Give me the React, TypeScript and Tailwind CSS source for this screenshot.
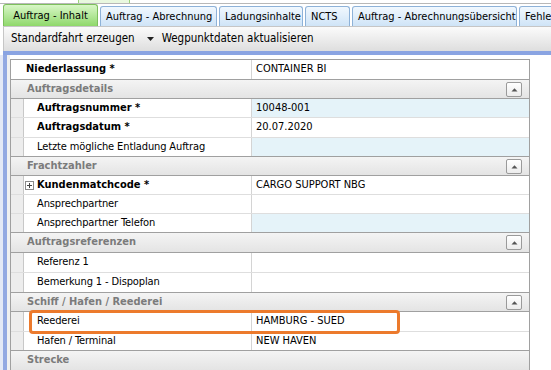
import React from "react";

type Row =
  | { kind: "top"; label: string; value: string; h: number }
  | { kind: "cat"; label: string; h: number }
  | { kind: "item"; label: string; value?: string; bold?: boolean; blue?: boolean; expand?: boolean; h: number; last?: boolean };

const rows: Row[] = [
  { kind: "top", label: "Niederlassung *", value: "CONTAINER BI", h: 20 },
  { kind: "cat", label: "Auftragsdetails", h: 19 },
  { kind: "item", label: "Auftragsnummer *", value: "10048-001", bold: true, blue: true, h: 19 },
  { kind: "item", label: "Auftragsdatum *", value: "20.07.2020", bold: true, h: 20 },
  { kind: "item", label: "Letzte mögliche Entladung Auftrag", blue: true, h: 19, last: true },
  { kind: "cat", label: "Frachtzahler", h: 19 },
  { kind: "item", label: "Kundenmatchcode *", value: "CARGO SUPPORT NBG", bold: true, expand: true, h: 19 },
  { kind: "item", label: "Ansprechpartner", h: 19 },
  { kind: "item", label: "Ansprechpartner Telefon", blue: true, h: 19, last: true },
  { kind: "cat", label: "Auftragsreferenzen", h: 20 },
  { kind: "item", label: "Referenz 1", h: 20 },
  { kind: "item", label: "Bemerkung 1 - Dispoplan", h: 20, last: true },
  { kind: "cat", label: "Schiff / Hafen / Reederei", h: 19 },
  { kind: "item", label: "Reederei", value: "HAMBURG - SUED", h: 20 },
  { kind: "item", label: "Hafen / Terminal", value: "NEW HAVEN", h: 19, last: true },
  { kind: "cat", label: "Strecke", h: 20 },
];

const tabs = [
  { label: "Auftrag - Inhalt", w: 95, active: true },
  { label: "Auftrag - Abrechnung", w: 117 },
  { label: "Ladungsinhalte", w: 84 },
  { label: "NCTS", w: 45 },
  { label: "Auftrag - Abrechnungsübersicht", w: 165 },
  { label: "Fehlerliste", w: 60 },
];

const CollapseButton = () => (
  <div className="ml-auto mr-[7px] flex h-[15px] w-[16px] items-center justify-center rounded-[2px] border border-[#9a9a9a] bg-gradient-to-b from-[#ffffff] to-[#ececec]">
    <svg width="7" height="5" viewBox="0 0 7 5">
      <path d="M0.5 4.5 L3.5 1.2 L6.5 4.5 Z" fill="#555" />
    </svg>
  </div>
);

export default function App() {
  return (
    <div
      className="relative h-[370px] w-[551px] overflow-hidden bg-white text-black font-stretch-condensed"
      style={{ fontFamily: "'DejaVu Sans Condensed', 'DejaVu Sans', 'Liberation Sans', sans-serif" }}
    >
      {/* remnant of upper tab row */}
      <div className="flex h-[4px] border-b border-[#b8b8b8]">
        <div className="w-[78px]" />
        <div className="w-[52px] border-x border-[#9bd27c] bg-[#e9f8df]" />
      </div>

      {/* tabs */}
      <div className="flex h-[22px] items-end gap-[2px] pl-[3px]">
        {tabs.map((t) =>
          t.active ? (
            <div
              key={t.label}
              className="flex h-[22px] shrink-0 items-center justify-center overflow-hidden rounded-t-[3px] border border-b-0 border-[#7dbf5c] bg-gradient-to-b from-[#d8f6c6] to-[#8fd86a] text-[11px] leading-none"
              style={{ width: t.w }}
            >
              <span className="whitespace-nowrap">{t.label}</span>
            </div>
          ) : (
            <div
              key={t.label}
              className="flex h-[20px] shrink-0 items-center justify-start overflow-hidden rounded-t-[3px] border border-b-0 border-[#8eb2d8] bg-gradient-to-b from-[#f1f8fe] to-[#cfe4f7] px-[5px] text-[11px] leading-none"
              style={{ width: t.w }}
            >
              <span className="whitespace-nowrap">{t.label}</span>
            </div>
          )
        )}
      </div>

      {/* toolbar */}
      <div className="ml-[3px] flex h-[25px] items-center border-l border-t border-[#c6c6c6] bg-gradient-to-b from-[#fbfbfb] to-[#dedede] text-[11.5px]">
        <span className="ml-[7px] whitespace-nowrap">Standardfahrt erzeugen</span>
        <svg className="ml-[12px]" width="7" height="4" viewBox="0 0 7 4">
          <path d="M0 0 H7 L3.5 4 Z" fill="#222" />
        </svg>
        <span className="ml-[8px] whitespace-nowrap">Wegpunktdaten aktualisieren</span>
      </div>

      {/* blue bar */}
      <div className="ml-[3px] h-[4px] bg-[#8aa4e2]" />

      {/* content */}
      <div className="flex h-[320px]">
        <div className="w-[3px] bg-[#e4e9f6]" />
        <div className="w-[4px] bg-[#93a9e2]" />
        <div className="w-[3px] bg-[#f0f0f0]" />
        <div className="relative mt-[4px] w-[520px] self-start border-l border-r border-t border-[#a0a0a0] bg-white">
          {rows.map((r, i) => {
            if (r.kind === "top") {
              return (
                <div key={i} className="flex border-b border-[#a0a0a0]" style={{ height: r.h }}>
                  <div className="flex w-[240px] items-center pl-[15px] text-[11px] font-bold">{r.label}</div>
                  <div className="flex flex-1 items-center border-l border-[#d4d4d4] pl-[4px] text-[11px]">{r.value}</div>
                </div>
              );
            }
            if (r.kind === "cat") {
              return (
                <div
                  key={i}
                  className="flex items-center border-b border-[#a0a0a0] bg-gradient-to-b from-[#f4f4f4] to-[#e4e4e4] pl-[16px] text-[11px] font-bold text-[#7b7b7b]"
                  style={{ height: r.h }}
                >
                  <span>{r.label}</span>
                  {r.label !== "Strecke" && <CollapseButton />}
                </div>
              );
            }
            return (
              <div
                key={i}
                className={`flex ${r.last ? "border-b border-[#a0a0a0]" : "border-b border-[#dedede]"}`}
                style={{ height: r.h }}
              >
                <div className="w-[12px] bg-[#ededed]" />
                <div className={`flex w-[228px] items-center border-l border-[#c8c8c8] ${r.bold ? "text-[11px] font-bold" : "text-[11px] tracking-[-0.12px]"}`}>
                  {r.expand ? (
                    <div className="ml-[1px] mr-[3px] flex h-[9px] w-[9px] items-center justify-center border border-[#8a8a8a] bg-white">
                      <svg width="5" height="5" viewBox="0 0 5 5">
                        <path d="M0 2.5 H5 M2.5 0 V5" stroke="#444" strokeWidth="1" />
                      </svg>
                    </div>
                  ) : (
                    <div className="w-[13px]" />
                  )}
                  <span className="whitespace-nowrap">{r.label}</span>
                </div>
                <div
                  className={`flex flex-1 items-center border-l border-[#d4d4d4] pl-[4px] text-[11px] ${r.blue ? "bg-[#e5f3f9]" : "bg-white"}`}
                >
                  {r.value}
                </div>
              </div>
            );
          })}
          {/* highlight marker */}
          <div className="pointer-events-none absolute left-[18px] top-[250px] h-[24px] w-[371px] rounded-[4px] border-[3px] border-[#ec7a2c]" />
        </div>
        <div className="flex-1 bg-white" />
      </div>
    </div>
  );
}
